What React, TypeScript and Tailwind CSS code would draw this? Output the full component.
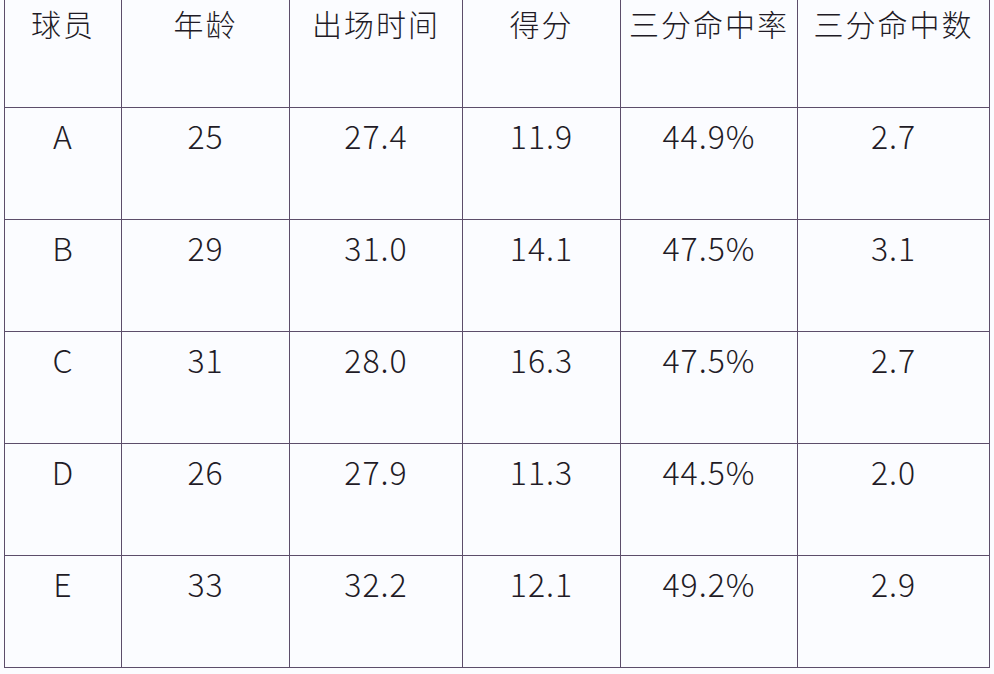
const headers = ["球员", "年龄", "出场时间", "得分", "三分命中率", "三分命中数"];

const rows = [
  ["A", "25", "27.4", "11.9", "44.9%", "2.7"],
  ["B", "29", "31.0", "14.1", "47.5%", "3.1"],
  ["C", "31", "28.0", "16.3", "47.5%", "2.7"],
  ["D", "26", "27.9", "11.3", "44.5%", "2.0"],
  ["E", "33", "32.2", "12.1", "49.2%", "2.9"],
];

const widths = ["w-[117px]", "w-[168px]", "w-[173px]", "w-[158px]", "w-[177px]", "w-[192px]"];

export default function App() {
  return (
    <div className="h-[674px] w-[994px] overflow-hidden bg-[#fbfcff] pl-[4px] font-['Noto_Sans_CJK_SC','Noto_Sans',sans-serif] text-[#1f1b26]">
      <table className="table-fixed border-collapse">
        <colgroup>
          {widths.map((w, i) => (
            <col key={i} className={w} />
          ))}
        </colgroup>
        <thead>
          <tr className="h-[107px]">
            {headers.map((h) => (
              <th
                key={h}
                className="border-x border-b border-[#5c4d6a] pt-[1px] align-top text-[30px] font-light leading-[44px] tracking-[2px]"
              >
                {h}
              </th>
            ))}
          </tr>
        </thead>
        <tbody>
          {rows.map((r) => (
            <tr key={r[0]} className="h-[112px]">
              {r.map((c, i) => (
                <td
                  key={i}
                  className="border border-[#5c4d6a] pt-[7px] text-center align-top text-[32px] font-light leading-[40px] tracking-[1px]"
                >
                  {c}
                </td>
              ))}
            </tr>
          ))}
        </tbody>
      </table>
    </div>
  );
}
